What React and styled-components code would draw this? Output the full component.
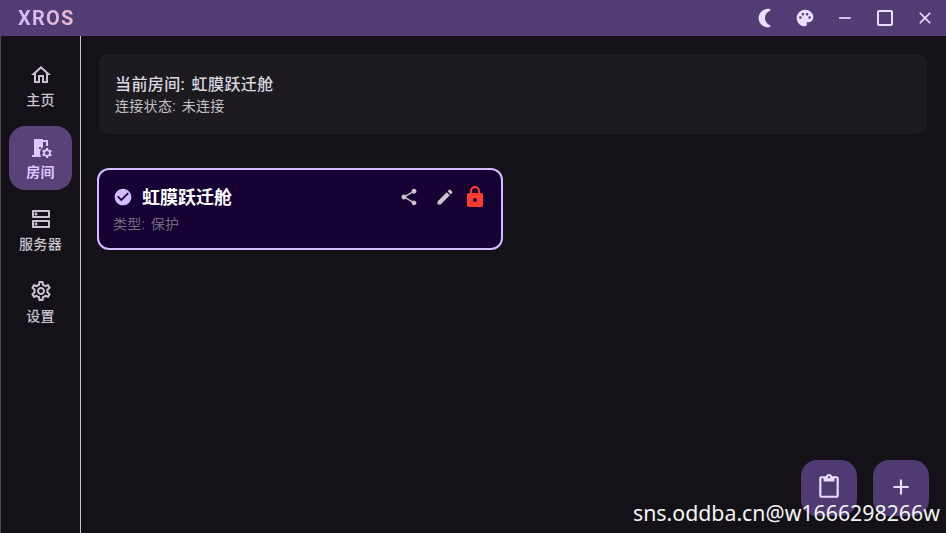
import React from "react";
import styled, { createGlobalStyle } from "styled-components";
import {
  MdOutlineHome, MdRoomPreferences, MdOutlineDns, MdOutlineSettings, MdNightlightRound, MdPalette,
  MdRemove, MdCropSquare, MdClose, MdCheckCircle, MdShare, MdEdit, MdLock, MdOutlineContentPaste, MdAdd,
} from "react-icons/md";

const Global = createGlobalStyle`
  html, body { margin: 0; padding: 0; height: 100%; background: #141218; }
  #root { height: 100%; }
  * { box-sizing: border-box; }
  body { font-family: Roboto, "Noto Sans CJK SC", sans-serif; overflow: hidden; }
`;

const Shell = styled.div`
  position: relative;
  width: 946px;
  height: 533px;
  display: flex;
  flex-direction: column;
  background: #141218;
  overflow: hidden;
`;
const TitleBar = styled.header`
  height: 36px;
  flex: none;
  display: flex;
  align-items: center;
  padding: 0 1px 0 18px;
  background: #513c74;
`;
const Logo = styled.div`
  font-size: 20px;
  font-weight: 700;
  letter-spacing: 1.2px;
  background: linear-gradient(90deg, #d0bcff, #efb8c8);
  background-size: 57px 100%;
  background-repeat: no-repeat;
  -webkit-background-clip: text;
  background-clip: text;
  color: transparent;
  flex: 1;
`;
const WinButton = styled.button`
  width: 40px;
  height: 36px;
  border: 0;
  padding: 0;
  background: none;
  color: #eaddff;
  display: flex;
  align-items: center;
  justify-content: center;
  font-size: ${(p) => p.$size || 20}px;
`;
const Body = styled.div`
  flex: 1;
  display: flex;
  min-height: 0;
`;
const Rail = styled.nav`
  width: 81px;
  flex: none;
  border-right: 1px solid #c9c5d0;
  border-left: 1px solid #49454f;
  padding: 18px 8px 0;
  display: flex;
  flex-direction: column;
  gap: 8px;
`;
const RailItem = styled.div`
  height: 64px;
  border-radius: 16px;
  display: flex;
  flex-direction: column;
  align-items: center;
  justify-content: center;
  gap: ${(p) => (p.$active ? 3 : 4)}px;
  background: ${(p) => (p.$active ? "#584278" : "transparent")};
  color: ${(p) => (p.$active ? "#dcc8ff" : "#cac4d0")};
  font-size: 14px;
  font-weight: ${(p) => (p.$active ? 700 : 500)};
  letter-spacing: 0.3px;
  line-height: 18px;
  svg { font-size: 24px; display: block; }
`;
const Content = styled.main`
  flex: 1;
  padding: 18px 19px 0 18px;
  display: flex;
  flex-direction: column;
  align-items: flex-start;
`;
const InfoCard = styled.section`
  width: 100%;
  height: 80px;
  border-radius: 10px;
  background: #1d1b20;
  padding: 20px 16px;
  color: #dcd8e0;
`;
const InfoTitle = styled.div`
  font-size: 16px;
  font-weight: 500;
  letter-spacing: 0.4px;
  word-spacing: 2px;
  line-height: 22px;
`;
const InfoSub = styled.div`
  font-size: 14px;
  letter-spacing: 0.3px;
  word-spacing: 2px;
  line-height: 20px;
  color: #c4c0c9;
`;
const RoomCard = styled.article`
  margin: 34px 0 0 -2px;
  width: 406px;
  height: 82px;
  border: 2px solid #d0bcff;
  border-radius: 12px;
  background: #160033;
  padding: 13px 14px;
`;
const RoomHead = styled.div`
  display: flex;
  align-items: center;
  height: 26px;
`;
const Check = styled.span`
  color: #d0bcff;
  font-size: 20px;
  display: flex;
  margin: 1px 9px 0 0;
`;
const RoomName = styled.h3`
  margin: 0;
  flex: 1;
  color: #fff;
  font-size: 18px;
  font-weight: 700;
`;
const CardIcon = styled.span`
  width: ${(p) => p.$width || 36}px;
  display: flex;
  justify-content: center;
  font-size: ${(p) => p.$size || 20}px;
  color: ${(p) => p.$color || "#c9c5ca"};
`;
const Actions = styled.div`
  display: flex;
  align-items: center;
  padding-top: 1px;
`;
const RoomType = styled.div`
  margin-top: 6px;
  font-size: 14px;
  letter-spacing: 0.25px;
  word-spacing: 2px;
  line-height: 18px;
  color: #736d7b;
`;
const Fabs = styled.div`
  position: absolute;
  right: 17px;
  bottom: 17px;
  display: flex;
  gap: 16px;
`;
const Fab = styled.button`
  width: 56px;
  height: 56px;
  border: 0;
  border-radius: 16px;
  padding: 0 0 2px;
  background: #4f3b72;
  color: #eaddff;
  display: flex;
  align-items: center;
  justify-content: center;
  font-size: 26px;
`;
const Watermark = styled.div`
  position: absolute;
  left: 633px;
  top: 498px;
  font-family: "Noto Sans", sans-serif;
  font-size: 21.3px;
  line-height: 30px;
  color: #f4f4f4;
  white-space: nowrap;
`;

export default function App() {
  return (
    <Shell>
      <Global />
      <TitleBar>
        <Logo>XROS</Logo>
        <WinButton $size={22}><MdNightlightRound /></WinButton>
        <WinButton><MdPalette /></WinButton>
        <WinButton><MdRemove /></WinButton>
        <WinButton $size={24}><MdCropSquare /></WinButton>
        <WinButton><MdClose /></WinButton>
      </TitleBar>
      <Body>
        <Rail>
          <RailItem><MdOutlineHome />主页</RailItem>
          <RailItem $active><MdRoomPreferences />房间</RailItem>
          <RailItem><MdOutlineDns />服务器</RailItem>
          <RailItem><MdOutlineSettings />设置</RailItem>
        </Rail>
        <Content>
          <InfoCard>
            <InfoTitle>当前房间: 虹膜跃迁舱</InfoTitle>
            <InfoSub>连接状态: 未连接</InfoSub>
          </InfoCard>
          <RoomCard>
            <RoomHead>
              <Check><MdCheckCircle /></Check>
              <RoomName>虹膜跃迁舱</RoomName>
              <Actions>
                <CardIcon><MdShare /></CardIcon>
                <CardIcon><MdEdit /></CardIcon>
                <CardIcon $color="#ff3b30" $size={24} $width={24}><MdLock /></CardIcon>
              </Actions>
            </RoomHead>
            <RoomType>类型: 保护</RoomType>
          </RoomCard>
        </Content>
      </Body>
      <Fabs>
        <Fab><MdOutlineContentPaste /></Fab>
        <Fab><MdAdd /></Fab>
      </Fabs>
      <Watermark>sns.oddba.cn@w1666298266w</Watermark>
    </Shell>
  );
}
